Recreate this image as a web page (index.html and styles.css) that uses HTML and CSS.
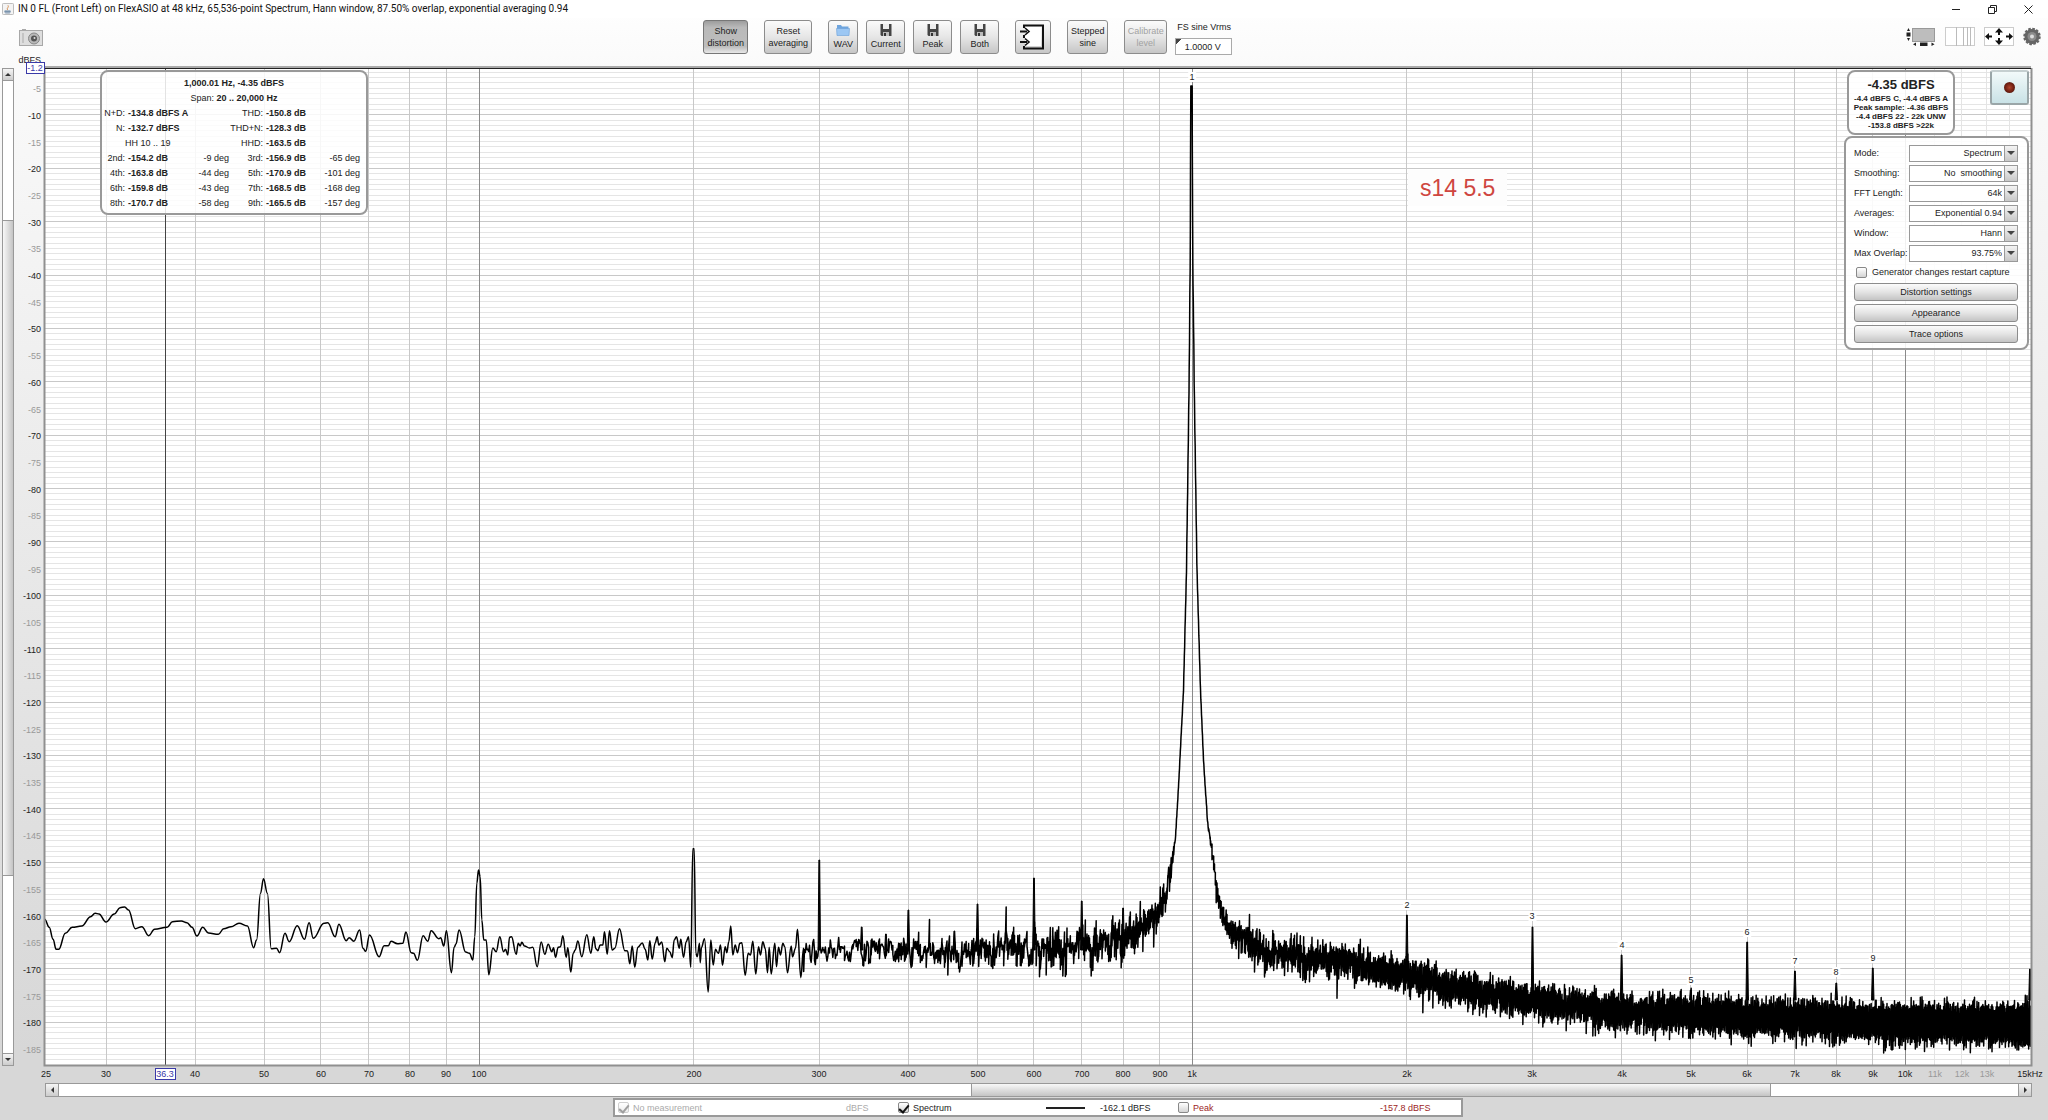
FILE: index.html
```html
<!DOCTYPE html>
<html lang="en">
<head>
<meta charset="utf-8">
<title>RTA Spectrum</title>
<link rel="stylesheet" href="styles.css">
</head>
<body>
<header class="titlebar">
  <svg class="app-icon" viewBox="0 0 13 13"><rect x=".5" y=".5" width="12" height="12" rx="1" fill="#f4f4f4" stroke="#b5b5b5"/><path d="M3 8.500h6v1.500H3zM3.500 11h5" fill="#7d95ad" stroke="#7d95ad" stroke-width=".8"/><path d="M6 7.500C4.500 5.500 8 5 6.500 2.500" fill="none" stroke="#d08a4c"/></svg>
  <h1 class="title">IN 0 FL (Front Left) on FlexASIO at 48 kHz, 65,536-point Spectrum, Hann window, 87.50% overlap, exponential averaging 0.94</h1>
  <div class="window-controls">
    <button aria-label="Minimize"><svg viewBox="0 0 9 9"><path d="M0 4.500h8"/></svg></button>
    <button aria-label="Restore"><svg viewBox="0 0 9 9"><path d="M.5 2.500h6v6h-6zM2.500 2.500v-2h6v6h-2"/></svg></button>
    <button aria-label="Close"><svg viewBox="0 0 9 9"><path d="M.5.5l8 8M8.500.5l-8 8"/></svg></button>
  </div>
</header>

<div class="toolbar">
  <div class="toolbar-left">
    <button class="camera" aria-label="Capture image"><svg viewBox="0 0 24 18"><rect x=".5" y="1.500" width="23" height="15" fill="#dedede" stroke="#a8a8a8"/><path d="M3 .5h4M4 4v10" stroke="#aaa"/><circle cx="15" cy="9.500" r="5.500" fill="#b8b8b8" stroke="#888"/><circle cx="15" cy="9.500" r="3" fill="#555"/><circle cx="15.500" cy="9" r="1" fill="#ddd"/></svg></button>
  </div>
  <div class="toolbar-main">
    <button class="tool pressed w45">Show<br>distortion</button>
    <button class="tool w48">Reset<br>averaging</button>
    <div class="group">
      <button class="tool w30"><svg class="ic" viewBox="0 0 14 12"><path d="M1 1h4l1 1.500h6.500V11H1z" fill="#6fa5de"/><path d="M.5 4.500h13L13 11.500H1z" fill="#9cc7f3" stroke="#6a9fd8" stroke-width=".6"/></svg>WAV</button>
      <button class="tool w39"><svg class="ic" viewBox="0 0 14 12"><path d="M1.500 0h11v12h-10l-1-1z" fill="#444"/><path d="M4 0h6v5H4z" fill="#eee"/><path d="M4 8h6v4H4z" fill="#bbb"/><path d="M5 9h2v3H5z" fill="#333"/></svg>Current</button>
      <button class="tool w39"><svg class="ic" viewBox="0 0 14 12"><path d="M1.500 0h11v12h-10l-1-1z" fill="#444"/><path d="M4 0h6v5H4z" fill="#eee"/><path d="M4 8h6v4H4z" fill="#bbb"/><path d="M5 9h2v3H5z" fill="#333"/></svg>Peak</button>
      <button class="tool w39"><svg class="ic" viewBox="0 0 14 12"><path d="M1.500 0h11v12h-10l-1-1z" fill="#444"/><path d="M4 0h6v5H4z" fill="#eee"/><path d="M4 8h6v4H4z" fill="#bbb"/><path d="M5 9h2v3H5z" fill="#333"/></svg>Both</button>
    </div>
    <button class="tool w36" aria-label="Input"><svg class="io" viewBox="0 0 26 26"><path d="M4 4V1.500h19v23H4V22M4 11v3" fill="none" stroke="#111" stroke-width="2"/><path d="M5 4v18h16V3H5z" fill="#fff"/><path d="M0 7.500h7M0 18h7" stroke="#111" stroke-width="2"/><path d="M5 4l4 3.500L5 11M5 14.500L9 18l-4 3.500" fill="none" stroke="#111" stroke-width="1.600"/></svg></button>
    <button class="tool w41">Stepped<br>sine</button>
    <div class="group">
      <button class="tool w43" disabled>Calibrate<br>level</button>
      <div class="vrms"><label for="vrms">FS sine Vrms</label><input id="vrms" type="text" value="1.0000 V"></div>
    </div>
  </div>
  <div class="toolbar-right">
    <button aria-label="Scrollbars"><svg width="30" height="20" viewBox="0 0 30 20"><rect x="6.500" y="1.500" width="22" height="13" fill="#bdbdbd" stroke="#999"/><path d="M1 4l1.500-3L4 4zM1 11l1.500 3L4 11zM.5 5.500h4v4h-4zM14 15.500h7.500v3.500H14zM10 15.500v3.500L7 17.200zM25.500 15.500v3.500l3-1.800z" fill="#222"/></svg></button>
    <button aria-label="Frequency grid"><svg width="30" height="20" viewBox="0 0 30 20"><rect x=".5" y=".5" width="29" height="18" fill="#fff" stroke="#ccc"/><path d="M11.500 0v19M18.500 0v19M22.500 0v19M25.500 0v19" stroke="#bbb"/></svg></button>
    <button aria-label="Graph limits"><svg width="30" height="20" viewBox="0 0 30 20"><rect x=".5" y=".5" width="29" height="18" fill="#fff" stroke="#ccc"/><path d="M1 9.500L5 6v7zM29 9.500L25 6v7zM15 1l4 4.500h-8zM15 18l4-4.500h-8z" fill="#111"/><path d="M3 9.500h5M22 9.500h5M15 3v5M15 11v5" stroke="#111" stroke-width="2"/></svg></button>
    <button aria-label="Settings"><svg width="18" height="20" viewBox="0 0 18 20"><circle cx="9" cy="9.500" r="7.500" fill="#666" stroke="#666" stroke-width="2.500" stroke-dasharray="2.500 1.430"/><circle cx="9" cy="9.500" r="7" fill="#666"/><circle cx="9" cy="9.500" r="4.500" fill="#8c8c8c"/><circle cx="9" cy="9.500" r="2" fill="#ddd"/></svg></button>
  </div>
</div>

<main class="graph">
  <div class="vscroll"><button class="up" aria-label="Scroll up"></button><div class="track"><div class="thumb"></div></div><button class="down" aria-label="Scroll down"></button></div>
  <div class="plot">
    <svg id="chart" class="chart" role="img" aria-label="Spectrum graph"></svg>
    <p class="note">s14 5.5</p>

    <section class="info">
      <p><b>1,000.01 Hz, -4.35 dBFS</b></p>
      <p>Span: <b>20 .. 20,000 Hz</b></p>
      <table>
        <colgroup><col class="c1"><col class="c2"><col class="c3"><col class="c4"><col class="c5"><col class="c6"></colgroup>
        <tr><th>N+D:</th><td>-134.8 dBFS A</td><td></td><th>THD:</th><td>-150.8 dB</td><td></td></tr>
        <tr><th>N:</th><td>-132.7 dBFS</td><td></td><th>THD+N:</th><td>-128.3 dB</td><td></td></tr>
        <tr><th></th><td class="plain">HH 10 .. 19</td><td></td><th>HHD:</th><td>-163.5 dB</td><td></td></tr>
        <tr><th>2nd:</th><td>-154.2 dB</td><td class="deg">-9 deg</td><th>3rd:</th><td>-156.9 dB</td><td class="deg">-65 deg</td></tr>
        <tr><th>4th:</th><td>-163.8 dB</td><td class="deg">-44 deg</td><th>5th:</th><td>-170.9 dB</td><td class="deg">-101 deg</td></tr>
        <tr><th>6th:</th><td>-159.8 dB</td><td class="deg">-43 deg</td><th>7th:</th><td>-168.5 dB</td><td class="deg">-168 deg</td></tr>
        <tr><th>8th:</th><td>-170.7 dB</td><td class="deg">-58 deg</td><th>9th:</th><td>-165.5 dB</td><td class="deg">-157 deg</td></tr>
      </table>
    </section>

    <aside class="side">
      <div class="side-top">
        <div class="level"><strong>-4.35 dBFS</strong><span>-4.4 dBFS C, -4.4 dBFS A</span><span>Peak sample: -4.36 dBFS</span><span>-4.4 dBFS 22 - 22k UNW</span><span>-153.8 dBFS &gt;22k</span></div>
        <button class="record" aria-label="Record"><span></span></button>
      </div>
      <form class="settings">
        <div class="field"><label for="mode">Mode:</label><span class="sel"><select id="mode"><option>Spectrum</option></select></span></div>
        <div class="field"><label for="smooth">Smoothing:</label><span class="sel"><select id="smooth"><option>No&nbsp; smoothing</option></select></span></div>
        <div class="field"><label for="fft">FFT Length:</label><span class="sel"><select id="fft"><option>64k</option></select></span></div>
        <div class="field"><label for="avg">Averages:</label><span class="sel"><select id="avg"><option>Exponential 0.94</option></select></span></div>
        <div class="field"><label for="win">Window:</label><span class="sel"><select id="win"><option>Hann</option></select></span></div>
        <div class="field"><label for="ovl">Max Overlap:</label><span class="sel"><select id="ovl"><option>93.75%</option></select></span></div>
        <label class="check"><input type="checkbox">Generator changes restart capture</label>
        <button type="button" class="wide">Distortion settings</button>
        <button type="button" class="wide">Appearance</button>
        <button type="button" class="wide">Trace options</button>
      </form>
    </aside>
  </div>
</main>

<div class="hscroll"><button class="left" aria-label="Scroll left"></button><div class="track"><div class="thumb"></div></div><button class="right" aria-label="Scroll right"></button></div>

<footer class="legend">
  <label class="trace off"><input type="checkbox" checked disabled>No measurement</label><span class="unit off">dBFS</span>
  <label class="trace"><input type="checkbox" checked>Spectrum</label><span class="swatch"></span><span class="val">-162.1 dBFS</span>
  <label class="trace peak"><input type="checkbox">Peak</label><span class="val peak">-157.8 dBFS</span>
</footer>
<script src="chart.js"></script>
</body>
</html>
```
FILE: styles.css
```css
* { box-sizing: border-box; }
body {
  margin: 0;
  min-height: 100vh;
  display: flex;
  flex-direction: column;
  font: 9px/12px "Liberation Sans", Arial, sans-serif;
  color: #222;
  background: linear-gradient(#fff 0, #fafafa 6%, #d7d7d7 94%);
}
p, h1 { margin: 0; }
button, input, select { font: inherit; color: inherit; margin: 0; }
button { padding: 0; border: 0; background: none; }
svg { display: block; }

.titlebar { display: flex; align-items: center; height: 18px; padding: 0 15px 0 2px; background: #fff; }
.app-icon { width: 12px; height: 12px; margin-right: 4px; }
.title { flex: 1; font: 10px/18px Roboto, "Noto Sans", sans-serif; color: #111; }
.window-controls { display: flex; gap: 27px; }
.window-controls svg { width: 9px; height: 9px; fill: none; stroke: #222; }

.toolbar { display: flex; height: 38px; padding-top: 2px; }
.toolbar-left { flex: 44 1 0; padding: 9px 0 0 19px; }
.toolbar-left svg { width: 24px; height: 18px; }
.toolbar-main { display: flex; gap: 16px; }
.group { display: flex; gap: 8px; }
.toolbar-right { flex: 52 1 0; display: flex; justify-content: flex-end; align-items: flex-start; gap: 9px; padding: 7px 7px 0 0; }
.tool {
  height: 34px;
  display: flex; flex-direction: column; align-items: center; justify-content: center;
  border: 1px solid #8c8c8c; border-radius: 3px;
  background: linear-gradient(#fbfbfb, #e6e6e6 50%, #c6c6c6);
  text-align: center; line-height: 12px;
}
.tool.pressed { border-color: #777; background: linear-gradient(#9d9d9d, #b9b9b9 20%, #bdbdbd 80%, #e8e8e8); }
.tool:disabled { color: #a2a2a2; }
.ic { width: 14px; height: 12px; margin-bottom: 2px; }
.io { width: 26px; height: 26px; }
.w30 { width: 30px; } .w36 { width: 36px; } .w39 { width: 39px; } .w41 { width: 41px; }
.w43 { width: 43px; } .w45 { width: 45px; } .w48 { width: 48px; }
.vrms { width: 57px; display: flex; flex-direction: column; gap: 5px; }
.vrms label { padding: 1px 0 0 2px; white-space: nowrap; }
.vrms input {
  width: 57px; height: 17px; padding: 0 10px 0 8px; text-align: center; border: 1px solid #aaa; border-radius: 0;
  background: linear-gradient(135deg, #444 4px, #fff 4px);
}

.graph { flex: 1; display: flex; min-height: 480px; }
.vscroll { width: 12px; margin: 12px 2px 17px 2px; display: flex; flex-direction: column; border: 1px solid #999; }
.track { flex: 1; background: #fff; display: flex; }
.vscroll .track { flex-direction: column; }
.vscroll .track::before { content: ""; flex: 139 1 0; }
.vscroll .track::after { content: ""; flex: 178 1 0; }
.vscroll .thumb { flex: 656 1 0; border: solid #999; border-width: 1px 0; background: linear-gradient(90deg, #f8f8f8, #c4c4c4); }
.vscroll button, .hscroll button { width: 12px; height: 12px; background: linear-gradient(#f5f5f5, #ccc); display: flex; align-items: center; justify-content: center; }
.vscroll button { width: 10px; }
.vscroll .up { border-bottom: 1px solid #999; }
.vscroll .down { border-top: 1px solid #999; }
.vscroll button::before, .hscroll button::before { content: ""; border: 3px solid transparent; }
.vscroll .up::before { border-top-width: 0; border-bottom-color: #333; }
.vscroll .down::before { border-bottom-width: 0; border-top-color: #333; }
.hscroll { height: 14px; margin: 0 16px 0 45px; display: flex; border: 1px solid #999; }
.hscroll .track { border: solid #999; border-width: 0 1px; }
.hscroll .track::before { content: ""; flex: 913 1 0; }
.hscroll .track::after { content: ""; flex: 247 1 0; }
.hscroll .thumb { flex: 800 1 0; border: solid #999; border-width: 0 1px; background: linear-gradient(#f8f8f8, #c4c4c4); }
.hscroll .left::before { border-left-width: 0; border-right-color: #333; }
.hscroll .right::before { border-right-width: 0; border-left-color: #333; }

.plot { position: relative; flex: 1; min-width: 0; }
.chart { position: absolute; inset: 0; width: 100%; height: 100%; font: 9px "Liberation Sans", Arial, sans-serif; }
.note { position: absolute; left: 68.500%; top: 114px; padding: 0 12px; background: #fdfdfd; font-size: 23px; line-height: 36px; color: #cf4640; }

.info { position: absolute; left: 84px; top: 14px; width: 268px; padding: 4px 1px 2px; border: 2px solid #999; border-radius: 8px; background: rgba(255, 255, 255, .85); line-height: 15px; }
.info p { text-align: center; line-height: 15px; }
.info table { table-layout: fixed; width: 257px; border-collapse: collapse; }
.info th, .info td { height: 15px; padding: 0; white-space: nowrap; }
.info th { text-align: right; font-weight: normal; }
.info td { padding-left: 3px; font-weight: bold; }
.info td.plain, .info td.deg { padding: 0; font-weight: normal; }
.info td.deg { text-align: right; }
.c1 { width: 22px; } .c2 { width: 62px; } .c3 { width: 42px; } .c4 { width: 34px; } .c5 { width: 49px; } .c6 { width: 48px; }

.side { position: absolute; right: 19px; top: 14px; width: 185px; }
.side-top { display: flex; justify-content: space-between; align-items: flex-start; padding-left: 3px; }
.level { width: 108px; height: 65px; padding-top: 4px; display: flex; flex-direction: column; align-items: center; border: 2px solid #999; border-radius: 8px; background: rgba(255, 255, 255, .88); font-weight: bold; }
.level strong { font-size: 13px; line-height: 18px; }
.level span { font-size: 8px; line-height: 9px; white-space: nowrap; }
.record { width: 39px; height: 35px; border: 2px solid #9aa6a8; border-top-color: #c5cfd0; border-radius: 3px; background: linear-gradient(#f2fafa, #c9e2e6); display: flex; align-items: center; justify-content: center; }
.record span { width: 11px; height: 11px; border-radius: 50%; background: radial-gradient(#b0442c, #6b1d10 60%, #444); }
.settings { margin-top: 1px; padding: 5px 9px 5px 8px; height: 214px; border: 2px solid #999; border-radius: 8px; background: rgba(255, 255, 255, .88); }
.field { display: flex; align-items: center; justify-content: space-between; height: 20px; white-space: nowrap; }
.sel { position: relative; width: 109px; height: 17px; }
.sel::before { content: ""; position: absolute; right: 1px; top: 1px; width: 12px; height: 15px; border-left: 1px solid #999; background: linear-gradient(#f4f4f4, #c8c8c8); pointer-events: none; }
.sel::after { content: ""; position: absolute; right: 3px; top: 6px; border: 4px solid transparent; border-top-color: #444; border-bottom-width: 0; pointer-events: none; }
.sel select { appearance: none; width: 109px; height: 17px; padding: 0 15px 0 2px; border: 1px solid #999; border-radius: 0; background: #fff; text-align: right; text-align-last: right; }
.check { display: flex; align-items: center; gap: 5px; height: 18px; padding-left: 2px; white-space: nowrap; }
input[type="checkbox"] { appearance: none; width: 11px; height: 11px; border: 1px solid #888; border-radius: 2px; background: linear-gradient(#fff, #d4d4d4); display: flex; align-items: center; justify-content: center; }
input[type="checkbox"]:checked::before { content: ""; width: 4px; height: 8px; border: solid #111; border-width: 0 2px 2px 0; transform: rotate(40deg); }
input[type="checkbox"]:disabled { opacity: .4; }
.wide { display: block; width: 164px; height: 18px; margin: 2px 0 3px; border: 1px solid #8c8c8c; border-radius: 3px; background: linear-gradient(#fbfbfb, #e4e4e4 50%, #c4c4c4); }

.legend { align-self: center; display: flex; align-items: center; width: 850px; height: 19px; margin: 1px 0 3px; margin-left: 28px; padding-left: 3px; border: 2px solid #999; background: #fff; white-space: nowrap; }
.trace { display: flex; align-items: center; gap: 4px; flex: 0 0 228px; }
.trace.off { color: #aaa; }
.unit { flex: 0 0 52px; color: #aaa; }
.trace:nth-of-type(2) { flex-basis: 148px; }
.swatch { width: 39px; height: 2px; margin-right: 15px; background: #222; }
.val { flex: 0 0 78px; }
.peak { color: #9c2525; }
.trace.peak { flex-basis: 202px; }
```
FILE: chart.js
```js
(function () {
  var svg = document.getElementById("chart");
  var PAD = { l: 29, t: 12, r: 17, b: 18 };
  var F0 = 24.63, F1 = 15000, DB0 = -1.2, DB1 = -188;

  // Low-frequency part of the trace: runs of points on an origin with a per-axis step.
  var runs = [
    { ox: 0, oy: 840, sx: 2.6133, sy: 3, p: "118,238 130,262 140,298 148,328 155,328 172,280 190,262 215,258 238,230 250,220 260,222 278,246 300,222 315,203 327,201 337,210 355,266 372,260 390,287 405,268 438,262 452,245 475,243 490,248 503,262 516,288 531,262 546,279 572,283 586,266 605,260 626,250 648,258 664,323 672,300 682,160 690,116 700,160 710,326 724,325 732,338 746,280 757,305 778,257 797,298 809,248 820,295 848,250 858,248 877,290 887,253 906,302 914,293 926,304 941,270 950,325 957,334 967,285 992,350 1005,317 1016,317 1023,304 1040,311 1054,310 1062,276 1076,338 1082,340 1092,361 1107,287 1119,304 1128,272 1148,296 1153,293 1161,318 1168,272 1181,398 1188,322 1193,312 1201,270 1218,336 1228,340" },
    { ox: 460, oy: 860, sx: 3, sy: 3, p: "40,300 46,230 52,70 57,30 62,50 67,180 73,240 80,240 88,344 100,264 110,275 121,230 132,275 138,268 145,285 150,232 156,230 170,283 176,250 182,258 187,247 195,258 210,264 220,262 233,320 245,246 256,283 266,253 277,275 282,263 288,292 296,262 303,260 310,227 320,292 325,263 334,336 341,280 347,270 355,243 367,290 382,224 394,280 403,230 409,266 415,272 422,255 430,255 435,215 443,283 450,212 458,270 466,265 480,206 496,272 504,273 511,311 518,258 526,322 535,262 548,249 557,268 565,300 571,242 578,297 587,249 593,230 598,255 607,246 616,305 622,265 631,275 638,293 644,240 651,230 659,265 664,238 672,292 680,245 687,230 694,322 700,-34 704,-34 709,280 713,290 720,250 722,308 726,262 735,236 746,396 754,240 761,315 768,268 775,278" },
    { ox: 700, oy: 840, sx: 3, sy: 3, p: "57,340 63,315 69,376 77,320 82,338 88,305 94,258 100,345 107,315 114,338 121,310 127,308 137,406 146,340 153,345 160,304 169,402 177,320 183,345 190,305 197,325 204,398 209,322 215,402 226,310 231,380 237,322 243,345 250,310 256,320 264,398 275,318 279,350 288,325 294,268 304,413 312,325" }
  ];
  // Mean level and noise spread [x, y, spread] above 350 Hz.
  var floor = [[804, 950, 7], [900, 950, 8], [960, 953, 10], [1000, 948, 10], [1100, 945, 11], [1123, 938, 11], [1145, 922, 10], [1160, 910, 9], [1168, 890, 7], [1172, 863, 4], [1176, 838, 1], [1179, 787, 0], [1184, 690, 0], [1187, 570, 0], [1189.5, 392, 0], [1190.8, 250, 0], [1191.3, 86, 0], [1192.7, 86, 0], [1193.2, 250, 0], [1194.8, 392, 0], [1197.5, 570, 0], [1201, 690, 0], [1204, 760, 0], [1208, 822, 1], [1212, 848, 3], [1217, 888, 5], [1225, 920, 6], [1233, 933, 7], [1260, 949, 9], [1300, 955, 9], [1340, 961, 9], [1380, 969, 9], [1407, 976, 9], [1440, 983, 8], [1480, 991, 8], [1533, 1000, 8], [1620, 1010, 8], [1750, 1016, 8], [1830, 1019, 8], [1906, 1021, 8], [2032, 1023, 8]];
  var spikes = [[300, 860], [344, 927], [372, 934], [400, 910], [464, 931], [500, 904], [600, 878], [700, 901], [800, 908], [2000, 915], [3000, 927], [4000, 955], [5000, 990], [6000, 942], [7000, 971], [8000, 983], [9000, 968], [14950, 969]];
  var tags = [["1", 1000, 77], ["2", 2000, 905], ["3", 3000, 916], ["4", 4000, 945], ["5", 5000, 980], ["6", 6000, 932], ["7", 7000, 961], ["8", 8000, 972], ["9", 9000, 958]];

  function draw() {
    var w = svg.clientWidth, h = svg.clientHeight;
    var W = w - PAD.l - PAD.r, H = h - PAD.t - PAD.b;
    var L = PAD.l, T = PAD.t, R = L + W, B = T + H, out = [];
    function fx(f) { return L + Math.log(f / F0) / Math.log(F1 / F0) * W; }
    function dy(d) { return T + (d - DB0) / (DB1 - DB0) * H; }
    function ux(x) { return L + (x - 45.5) / 1986 * W; }
    function uy(y) { return T + (y - 68) / 997 * H; }
    function snap(v) { return Math.floor(v) + 0.5; }
    function vline(x, c, sw) { out.push('<path d="M' + snap(x) + ' ' + T + 'V' + B + '" stroke="' + c + '" stroke-width="' + (sw || 1) + '"/>'); }
    function text(x, y, s, c, anchor) { out.push('<text x="' + Math.round(x) + '" y="' + Math.round(y) + '" fill="' + c + '" text-anchor="' + (anchor || "middle") + '">' + s + '</text>'); }

    out.push('<rect x="' + L + '" y="' + T + '" width="' + W + '" height="' + H + '" fill="#fff"/>');
    for (var d = -2; d > -188; d--) {
      var c = d % 10 === 0 ? "#c8c8c8" : "#e5e5e5";
      out.push('<path d="M' + L + ' ' + snap(dy(d)) + 'H' + R + '" stroke="' + c + '"/>');
      if (d % 5 === 0) text(L - 4, dy(d) + 4, d, d % 10 ? "#999" : "#222", "end");
    }
    [30, 40, 50, 60, 70, 80, 90, 200, 300, 400, 500, 600, 700, 800, 900, 2000, 3000, 4000, 5000, 6000, 7000, 8000, 9000].forEach(function (f) { vline(fx(f), "#c8c8c8"); });
    [11000, 12000, 13000, 14000].forEach(function (f) { vline(fx(f), "#e4e4e4"); });
    [100, 1000, 10000].forEach(function (f) { vline(fx(f), "#8a8a8a"); });
    vline(fx(36.3), "#444");

    var pts = [];
    runs.forEach(function (r) {
      r.p.split(" ").forEach(function (s) {
        var a = s.split(",");
        pts.push([ux(r.ox + a[0] / r.sx), uy(r.oy + a[1] / r.sy)]);
      });
    });
    // Rounded curve through the low-frequency points.
    var path = "M" + pts[0][0].toFixed(1) + " " + pts[0][1].toFixed(1);
    for (var i = 1; i < pts.length; i++) {
      var a = pts[i - 1], b = pts[i], k = (b[0] - a[0]) * 0.4;
      path += "C" + (a[0] + k).toFixed(1) + " " + a[1].toFixed(1) + " " + (b[0] - k).toFixed(1) + " " + b[1].toFixed(1) + " " + b[0].toFixed(1) + " " + b[1].toFixed(1);
    }

    // One sample per FFT bin, reduced to a min/max pair per column.
    var seed = 12345, prev = 0, seg = 0, col = null, lo, hi;
    function rnd() { seed = (seed * 1664525 + 1013904223) % 4294967296; return seed / 4294967296; }
    function gauss() { return Math.sqrt(-2 * Math.log(rnd() + 1e-9)) * Math.cos(6.2832 * rnd()); }
    function flush() {
      if (col === null) return;
      var x = ux(col).toFixed(2);
      path += "L" + x + " " + uy(lo).toFixed(1) + (hi - lo > 0.5 ? "L" + x + " " + uy(hi).toFixed(1) : "");
    }
    for (var f = 285.5; f < 14990; f += 0.7324) {
      var x = 479.5 + 713.3 * Math.log10(f / 100);
      while (seg < floor.length - 2 && floor[seg + 1][0] < x) seg++;
      var p = floor[seg], q = floor[seg + 1], t = Math.max(0, (x - p[0]) / (q[0] - p[0]));
      prev = prev * 0.25 + gauss() * 0.96;
      var n = prev * (p[2] + (q[2] - p[2]) * t);
      var y = p[1] + (q[1] - p[1]) * t + (n > 0 ? n * 1.15 : n * 0.9);
      var per = x > 1175 && x < 1212 ? 6 : 1.2;
      var cx = Math.round(x * per) / per;
      if (cx !== col) { flush(); col = cx; lo = hi = y; }
      lo = Math.min(lo, y); hi = Math.max(hi, y);
    }
    flush();
    out.push('<path d="' + path + '" fill="none" stroke="#000" stroke-width="1.5" stroke-linejoin="round"/>');
    spikes.forEach(function (s) {
      var base = s[0] < 1000 ? 950 : s[0] < 2500 ? 976 : 1000, x = fx(s[0]);
      out.push('<path d="M' + (x - 1.2) + ' ' + uy(base) + 'L' + (x - 0.4) + ' ' + uy(s[1]) + 'h.8L' + (x + 1.2) + ' ' + uy(base) + 'z" stroke="#000"/>');
    });
    tags.forEach(function (g) {
      out.push('<rect x="' + (fx(g[1]) - 4) + '" y="' + (uy(g[2]) - 5) + '" width="8" height="10" fill="#fff"/>');
      text(fx(g[1]), uy(g[2]) + 3, g[0], "#222");
    });

    out.push('<path d="M' + (L - 0.5) + ' ' + T + 'V' + (B + 0.5) + 'H' + (R + 0.5) + 'V' + T + '" fill="none" stroke="#909090" stroke-width="2"/>');
    out.push('<path d="M' + L + ' ' + (T - 1) + 'H' + R + '" stroke="#aaa" stroke-width="2"/><path d="M' + L + ' ' + (T + 0.5) + 'H' + R + '" stroke="#222"/>');

    var ly = B + 12;
    [25, 30, 40, 50, 60, 70, 80, 90, 100, 200, 300, 400, 500, 600, 700, 800, 900].forEach(function (f) { text(f === 25 ? L + 1 : fx(f), ly, f, "#222"); });
    for (var m = 1; m < 11; m++) text(fx(m * 1000), ly, m + "k", "#222");
    for (m = 11; m < 14; m++) text(fx(m * 1000), ly, m + "k", "#999");
    text(R - 1, ly, "15kHz", "#222");

    function marker(x, y, mw, s) {
      out.push('<rect x="' + (Math.round(x) + 0.5) + '" y="' + (Math.round(y) + 0.5) + '" width="' + mw + '" height="11" fill="#fff" stroke="#3a3aa8"/>');
      text(x + mw / 2, y + 9, s, "#3a3aa8");
    }
    text(L - 4, 7, "dBFS", "#222", "end");
    marker(L - 19, 6, 18, "-1.2");
    marker(fx(36.3) - 10, B + 3, 20, "36.3");
    svg.innerHTML = out.join("");
  }
  draw();
  window.addEventListener("resize", draw);
})();
```
